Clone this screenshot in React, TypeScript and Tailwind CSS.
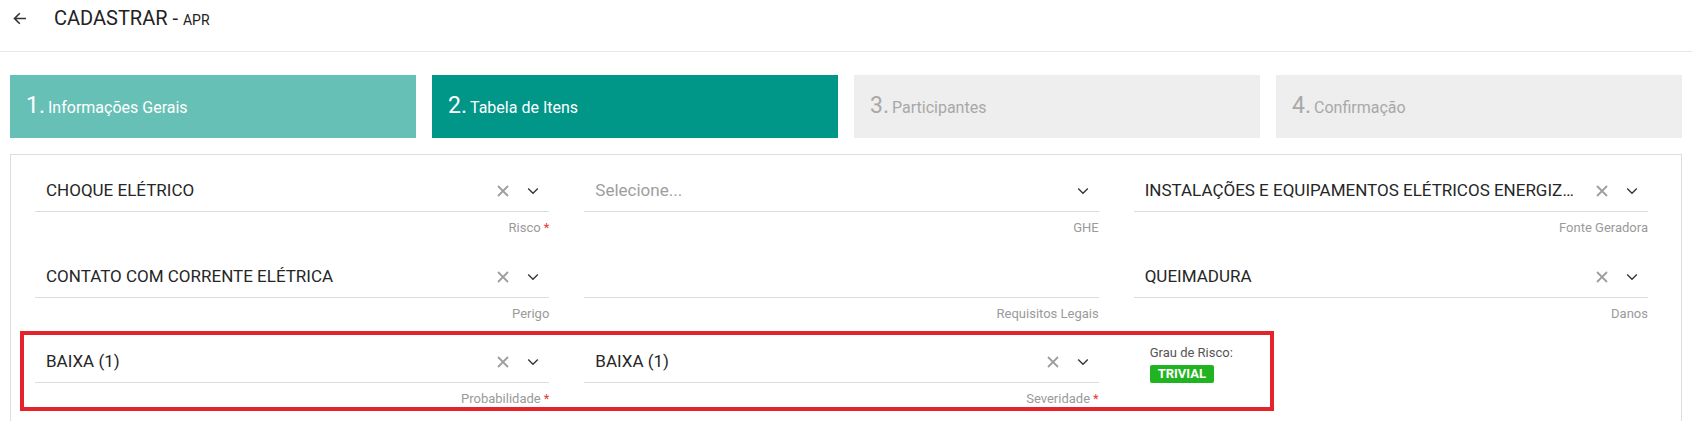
import React from 'react'

type Field = {
    value?: string
    placeholder?: string
    label: string
    required?: boolean
    clear?: boolean
    arrow?: boolean
}

const steps = [
    { n: '1.', label: 'Informações Gerais', cls: 'bg-[#67c0b6] text-white' },
    { n: '2.', label: 'Tabela de Itens', cls: 'bg-[#009688] text-white' },
    { n: '3.', label: 'Participantes', cls: 'bg-[#eeeeee] text-[#a8a8a8]' },
    { n: '4.', label: 'Confirmação', cls: 'bg-[#eeeeee] text-[#a8a8a8]' },
]

function ClearIcon() {
    return (
        <svg width="12" height="12" viewBox="0 0 12 12" fill="none">
            <path d="M1 1L11 11M11 1L1 11" stroke="#9e9e9e" strokeWidth="1.8" />
        </svg>
    )
}

function ArrowIcon() {
    return (
        <svg width="12" height="8" viewBox="0 0 12 8" fill="none">
            <path d="M1.2 1.5L6 6.3L10.8 1.5" stroke="#333" strokeWidth="1.3" />
        </svg>
    )
}

function SelectField({ field }: { field: Field }) {
    return (
        <div>
            <div className="h-[41px] flex items-center border-b border-[#dddddd] pl-[11px] pr-[10px]">
                <div className={`flex-1 min-w-0 truncate pr-[12px] text-[17px] ${field.value ? 'text-[#262626]' : 'text-[#9e9e9e]'}`}>
                    {field.value ?? field.placeholder}
                </div>
                <div className="flex items-center gap-[18px]">
                    {field.clear && <ClearIcon />}
                    {field.arrow && <ArrowIcon />}
                </div>
            </div>
            <div className="mt-[7px] leading-[18px] text-right text-[13px] text-[#9a9a9a]">
                {field.label}
                {field.required && <span className="text-[#e53935] ml-[3px]">*</span>}
            </div>
        </div>
    )
}

export default function App() {
    const row1: Field[] = [
        { value: 'CHOQUE ELÉTRICO', label: 'Risco', required: true, clear: true, arrow: true },
        { placeholder: 'Selecione...', label: 'GHE', arrow: true },
        { value: 'INSTALAÇÕES E EQUIPAMENTOS ELÉTRICOS ENERGIZADOS', label: 'Fonte Geradora', clear: true, arrow: true },
    ]
    const row2: Field[] = [
        { value: 'CONTATO COM CORRENTE ELÉTRICA', label: 'Perigo', clear: true, arrow: true },
        { label: 'Requisitos Legais' },
        { value: 'QUEIMADURA', label: 'Danos', clear: true, arrow: true },
    ]
    const row3: Field[] = [
        { value: 'BAIXA (1)', label: 'Probabilidade', required: true, clear: true, arrow: true },
        { value: 'BAIXA (1)', label: 'Severidade', required: true, clear: true, arrow: true },
    ]

    return (
        <div className="min-h-screen bg-white font-['Roboto',sans-serif] overflow-hidden">
            {/* Header */}
            <header className="h-[52px] border-b border-[#e8e8e8]">
                <div className="h-[36px] flex items-center pl-[13px]">
                    <svg width="14" height="13" viewBox="0 0 14 13" fill="none">
                        <path d="M13 6.5H2M6.8 1.2L1.5 6.5L6.8 11.8" stroke="#333" strokeWidth="1.6" />
                    </svg>
                    <h1 className="ml-[27px] text-[20px] text-[#222] leading-none">
                        CADASTRAR - <span className="text-[14px]">APR</span>
                    </h1>
                </div>
            </header>

            <div className="px-[10px] pt-[23px]">
                {/* Steps */}
                <div className="grid grid-cols-4 gap-4">
                    {steps.map((s) => (
                        <div key={s.n} className={`h-[63px] flex items-center pl-[16px] ${s.cls}`}>
                            <span className="leading-none mt-[-2px]">
                                <span className="text-[23px]">{s.n}</span>
                                <span className="text-[16px] ml-[3px]">{s.label}</span>
                            </span>
                        </div>
                    ))}
                </div>

                {/* Form */}
                <div className="mt-4 border border-b-0 border-[#dddddd] pt-[16px] pl-[24px] pr-[33px] h-[300px]">
                    <div className="grid grid-cols-3 gap-x-[35px] mb-[20px]">
                        {row1.map((f) => <SelectField key={f.label} field={f} />)}
                    </div>
                    <div className="grid grid-cols-3 gap-x-[35px] mb-[19px]">
                        {row2.map((f) => <SelectField key={f.label} field={f} />)}
                    </div>
                    <div className="relative grid grid-cols-3 gap-x-[35px]">
                        {row3.map((f) => <SelectField key={f.label} field={f} />)}
                        <div className="pl-[16px] pt-[3px]">
                            <div className="text-[13px] leading-[16px] text-[#555]">Grau de Risco:</div>
                            <span className="inline-block mt-[4px] px-[8px] leading-[18px] text-[13px] font-bold text-white bg-[#22b322] rounded-[2px]">
                                TRIVIAL
                            </span>
                        </div>
                        <div className="absolute left-[-15px] top-[-11px] w-[1254px] h-[80px] border-[4px] border-[#e4242a] pointer-events-none" />
                    </div>
                </div>
            </div>
        </div>
    )
}
